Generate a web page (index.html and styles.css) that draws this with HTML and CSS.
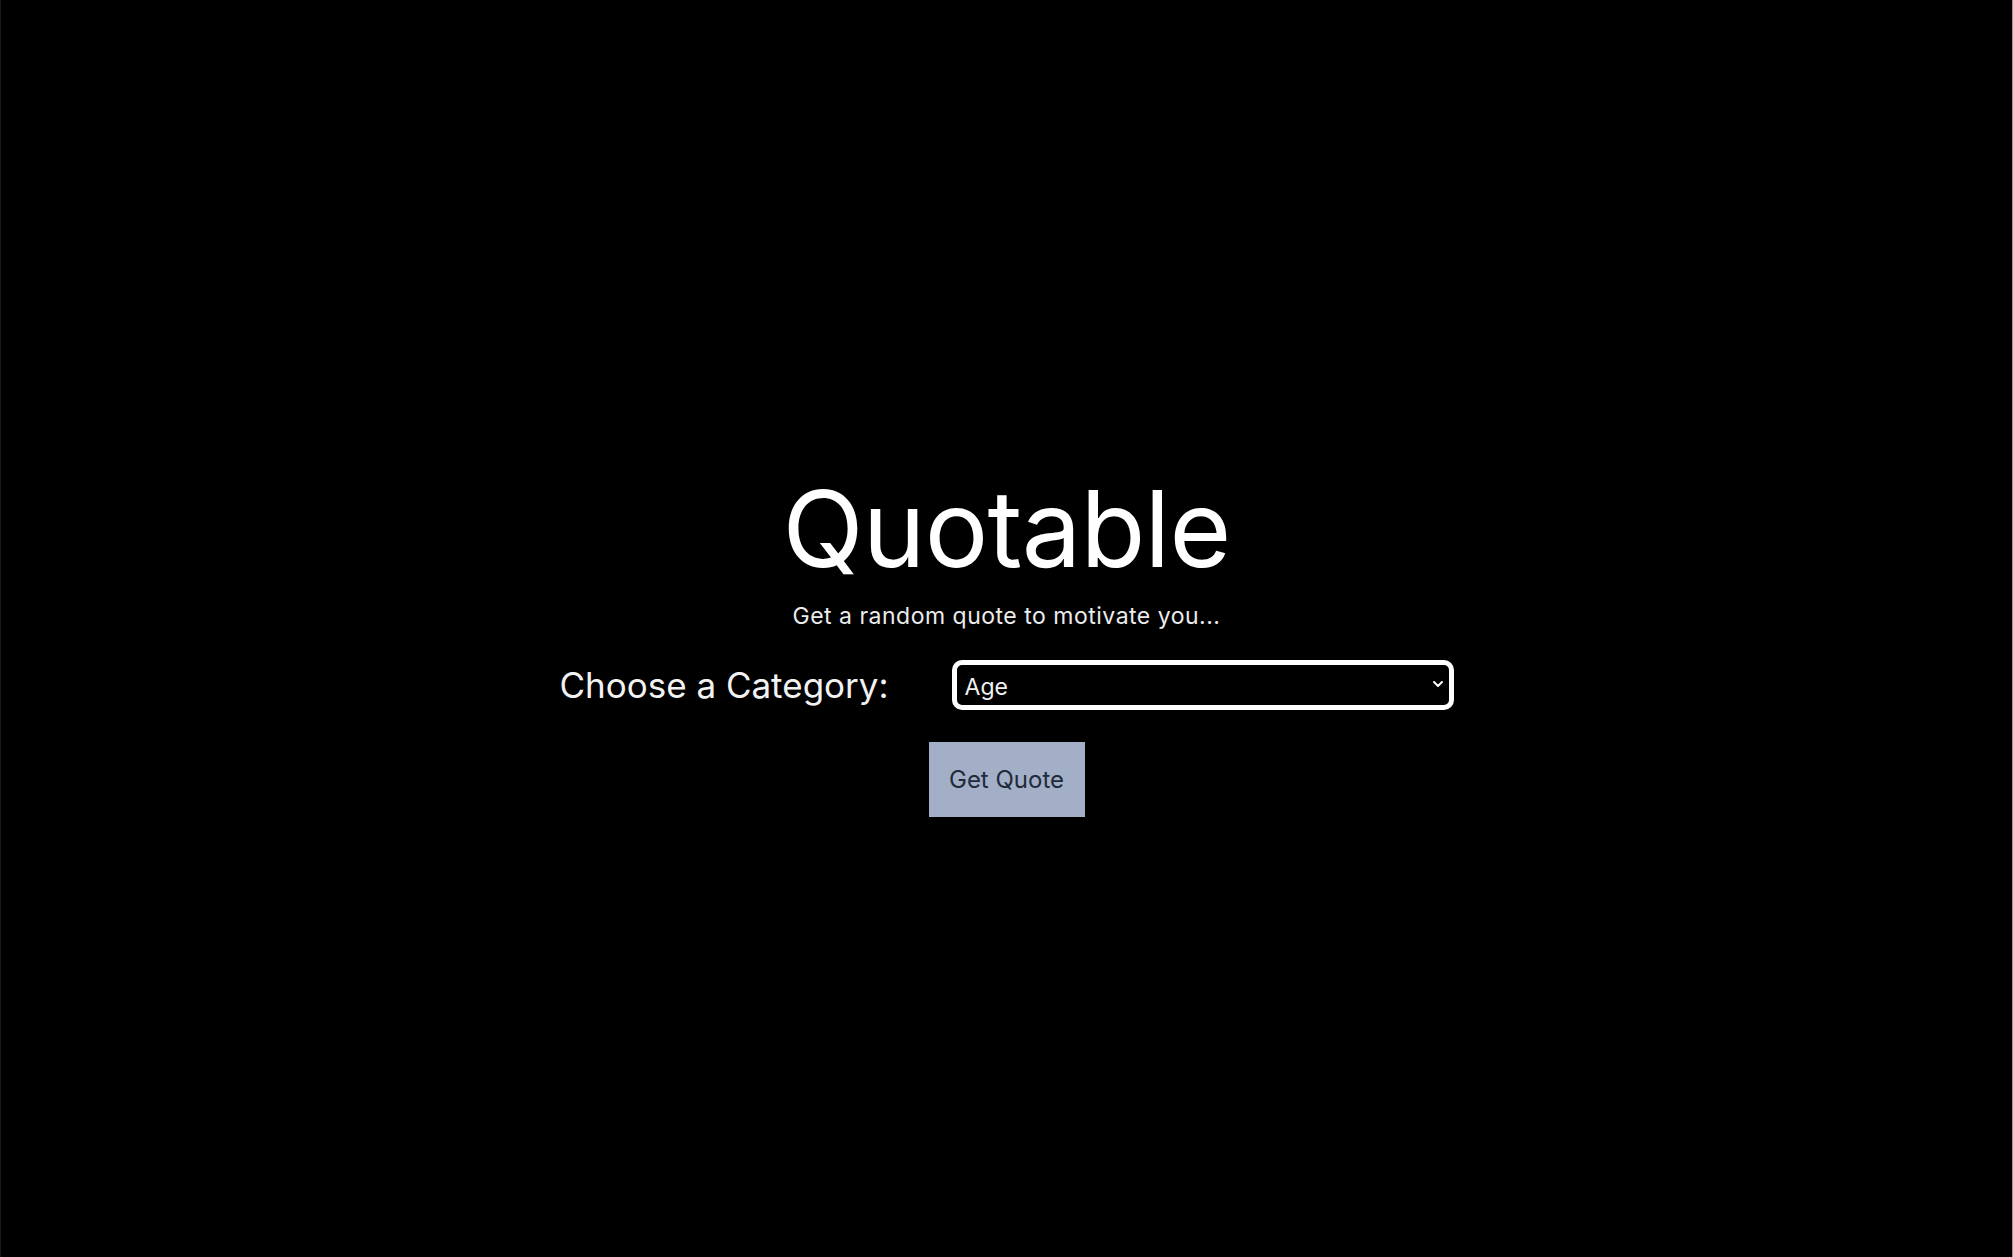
FILE: index.html
```html
<!DOCTYPE html>
<html lang="en">
<head>
<meta charset="utf-8">
<title>Quotable</title>
<link rel="stylesheet" href="styles.css">
</head>
<body>
<main class="page">
  <h1 class="title">Quotable</h1>
  <p class="subtitle">Get a random quote to motivate you...</p>
  <div class="row">
    <label class="label" for="category">Choose a Category:</label>
    <div class="select-wrap">
      <select id="category" class="select">
        <option>Age</option>
      </select>
      <svg class="chevron" width="12" height="8" viewBox="0 0 12 8" aria-hidden="true">
        <path d="M2 2 L6 6 L10 2" fill="none" stroke="#ffffff" stroke-width="2" stroke-linecap="round" stroke-linejoin="round"/>
      </svg>
    </div>
  </div>
  <button class="btn" type="button">Get Quote</button>
</main>
</body>
</html>
```
FILE: styles.css
```css
html, body {
  margin: 0;
  padding: 0;
  background: #000;
}
body {
  font-family: Inter, "Noto Sans", sans-serif;
  color: #fff;
}
.page {
  box-sizing: border-box;
  min-height: 1257px;
  border-left: 1px solid #1a1a1a;
  border-right: 1px solid #9a9a9a;
  display: flex;
  flex-direction: column;
  align-items: center;
  padding-top: 476px;
}
.title {
  margin: 0;
  font-size: 106px;
  line-height: 106px;
  font-weight: 400;
  letter-spacing: -0.8px;
}
.subtitle {
  margin: 23px 0 0;
  font-size: 23px;
  line-height: 22px;
  letter-spacing: 0.5px;
  color: #ececec;
}
.row {
  margin-top: 33px;
  display: flex;
  align-items: center;
  gap: 63px;
}
.label {
  font-size: 35px;
  line-height: 35px;
  color: #f2f2f2;
}
.select-wrap {
  position: relative;
  width: 502px;
  height: 50px;
}
.select {
  appearance: none;
  -webkit-appearance: none;
  box-sizing: border-box;
  width: 100%;
  height: 100%;
  margin: 0;
  background: #000;
  color: #f0f0f0;
  border: 5px solid #fff;
  border-radius: 10px;
  padding: 4px 0 0 8px;
  font-family: Inter, "Noto Sans", sans-serif;
  font-size: 23px;
  outline: none;
}
.chevron {
  position: absolute;
  right: 10px;
  top: 20px;
  pointer-events: none;
}
.btn {
  margin-top: 32px;
  width: 156px;
  height: 75px;
  border: none;
  border-radius: 0;
  background: #a2afc7;
  color: #1f2a3a;
  font-family: Inter, "Noto Sans", sans-serif;
  font-size: 24px;
  padding: 0;
}
```
